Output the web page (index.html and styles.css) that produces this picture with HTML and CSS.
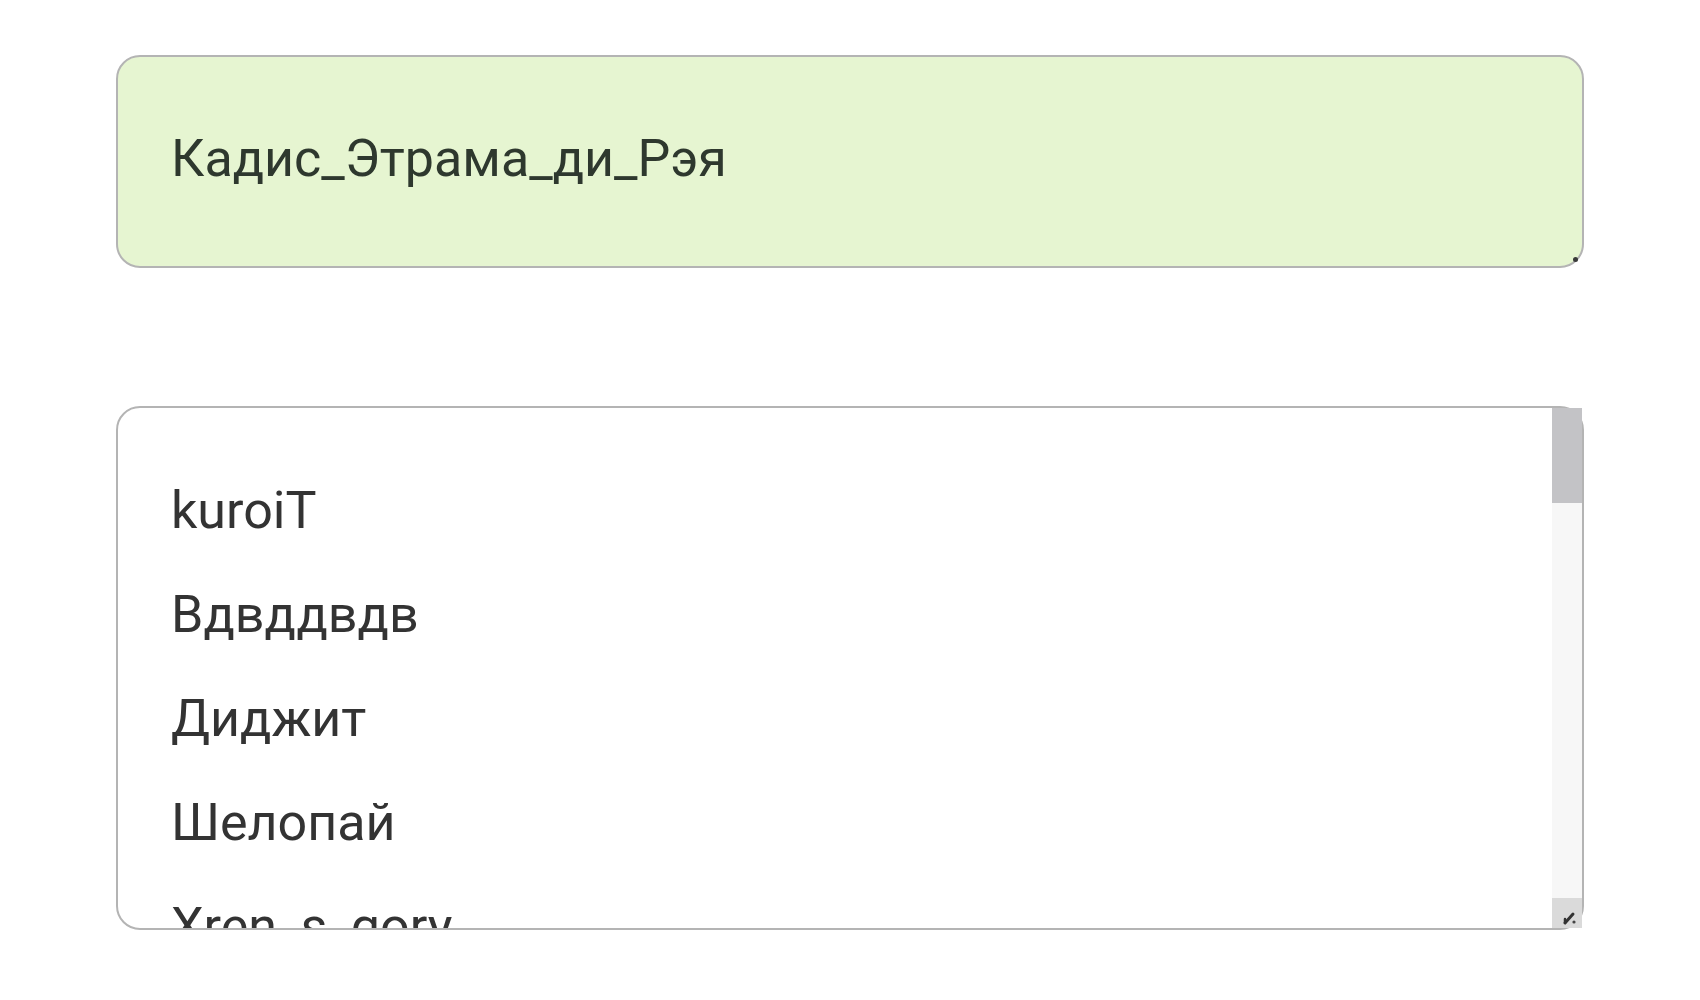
FILE: index.html
```html
<!DOCTYPE html>
<html lang="ru">
<head>
    <meta charset="UTF-8">
    <meta name="viewport" content="width=device-width, initial-scale=1.0">
    <title>Ники</title>
    <link rel="stylesheet" href="styles.css">
</head>
<body>
    <div class="page">
        <div class="field field-name">
            <div class="value">Кадис_Этрама_ди_Рэя</div>
            <span class="grip"></span>
        </div>

        <div class="field field-list">
            <ul class="names">
                <li>kuroiT</li>
                <li>Вдвддвдв</li>
                <li>Диджит</li>
                <li>Шелопай</li>
                <li>Xren_s_gory</li>
            </ul>
            <div class="scrollbar">
                <div class="thumb"></div>
                <div class="track"></div>
                <div class="corner">
                    <svg width="30" height="30" viewBox="0 0 30 30">
                        <path d="M13 25 L21 16" stroke="#333" stroke-width="3" stroke-linecap="round" fill="none"/>
                        <path d="M13 25 L13 21" stroke="#333" stroke-width="2.5" stroke-linecap="round" fill="none"/>
                        <circle cx="22" cy="24" r="1.6" fill="#444"/>
                    </svg>
                </div>
            </div>
        </div>
    </div>
</body>
</html>
```

FILE: styles.css
```css
body{
    margin: 0;
    background: #fff;
    font-family: Roboto, 'Noto Sans', sans-serif;
}
.page{
    width: 1468px;
    padding: 55px 0 0 116px;
}
.field{
    box-sizing: border-box;
    border: 2px solid #b4b4b4;
    border-radius: 24px;
    font-size: 52px;
    line-height: 104px;
}
.field-name{
    position: relative;
    height: 213px;
    padding: 50px 53px 0 53px;
    background-color: #e6f5d1;
    color: #2e382e;
}
.grip{
    position: absolute;
    right: 4px;
    bottom: 4px;
    width: 5px;
    height: 5px;
    border-radius: 50%;
    background: #3a3a3a;
}
.field-list{
    display: flex;
    height: 524px;
    margin-top: 138px;
    background: #fff;
    color: #333;
}
.names{
    flex: 1;
    margin: 0;
    padding: 51px 0 0 53px;
    list-style: none;
    overflow: hidden;
    border-radius: 22px 0 0 22px;
}
.scrollbar{
    display: flex;
    flex-direction: column;
    width: 30px;
}
.thumb{
    height: 95px;
    background: #c3c3c6;
}
.track{
    flex: 1;
    background: #f7f7f7;
}
.corner{
    height: 30px;
    background: #dadada;
}
.corner svg{
    display: block;
}
```
